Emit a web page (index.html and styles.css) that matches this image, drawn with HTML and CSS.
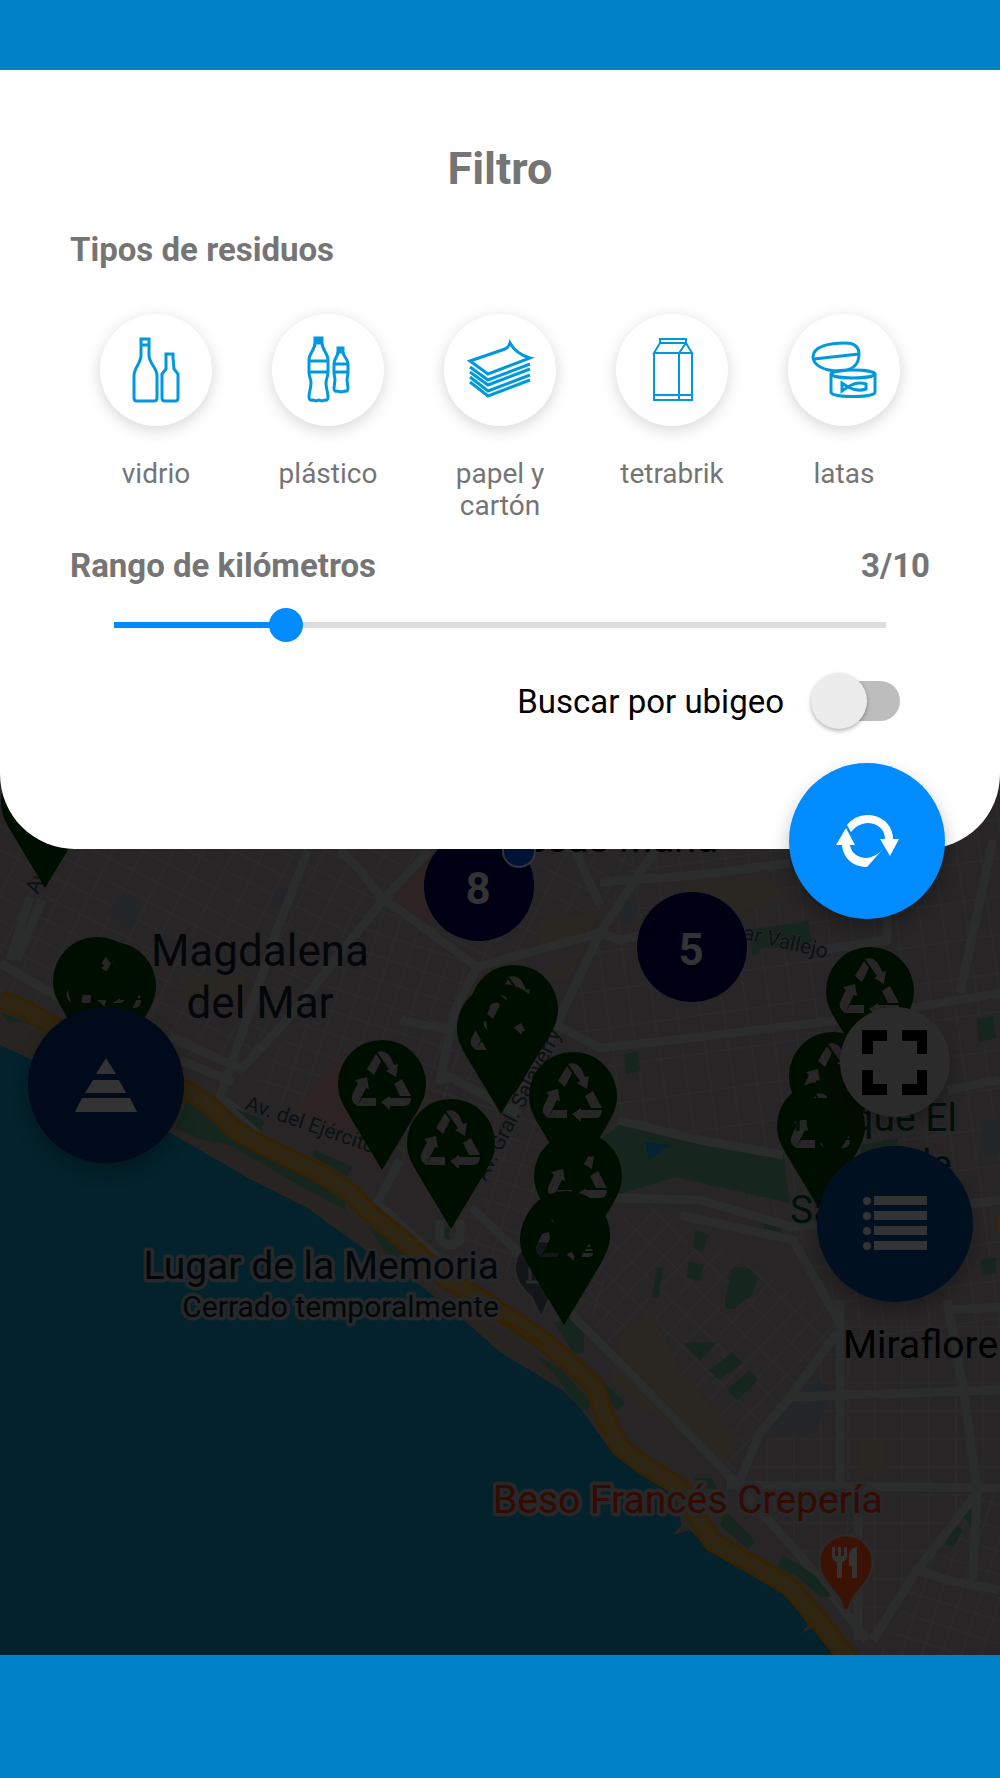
FILE: index.html
```html
<!DOCTYPE html>
<html lang="es">
<head>
    <meta charset="UTF-8">
    <meta name="viewport" content="width=device-width, initial-scale=1.0">
    <title>Filtro</title>
    <link rel="stylesheet" href="styles.css">
</head>
<body>
    <header class="top-bar"></header>

    <main class="stage">
        <!-- Mapa -->
        <svg class="map" viewBox="0 70 1000 1585" preserveAspectRatio="xMidYMin slice" role="img" aria-label="Mapa de puntos de reciclaje">
            <defs>
                <pattern id="grid-a" width="27" height="21" patternUnits="userSpaceOnUse" patternTransform="rotate(27)">
                    <path class="street" d="M0 0H27M0 0V21"/>
                </pattern>
                <pattern id="grid-b" width="23" height="38" patternUnits="userSpaceOnUse" patternTransform="rotate(-8)">
                    <path class="street" d="M0 0H23M0 0V38"/>
                </pattern>
                <pattern id="grid-c" width="19" height="26" patternUnits="userSpaceOnUse" patternTransform="rotate(44)">
                    <path class="street" d="M0 0H19M0 0V26"/>
                </pattern>
                <pattern id="grid-d" width="27" height="28" patternUnits="userSpaceOnUse" patternTransform="translate(10 10)">
                    <path class="street" d="M0 0H27M0 0V28"/>
                </pattern>
                <pattern id="grid-e" width="19" height="22" patternUnits="userSpaceOnUse" patternTransform="rotate(18)">
                    <path class="street" d="M0 0H19M0 0V22"/>
                </pattern>
                <path id="pin" fill-rule="evenodd" d="M44 130L11 75C3 62 0 54 0 44A44 44 0 0 1 88 44C88 54 85 62 77 75Z
                    M38 14L29 29L36 35L43 21Z
                    M39 12Q48 9 53 18L56 25L60 24L58 37L48 31L51 29Z
                    M29 37L31 49L28 48L19 66Q11 61 15 53L20 43L17 40Z
                    M24 58H38V66H19Z
                    M56 44L64 39L73 56H62Z
                    M43 62L52 56V58H73Q73 65 67 66H52V70Z"/>
            </defs>

            <rect class="land" y="70" width="1000" height="1585"/>

            <!-- Manzanas -->
            <path fill="url(#grid-a)" d="M0 800H330L383 900L240 1070L0 1000Z"/>
            <path fill="url(#grid-e)" d="M383 900L478 968L440 1180L380 1160L250 1090Z"/>
            <path fill="url(#grid-a)" d="M330 800H600L655 850L600 930L478 968L383 900Z"/>
            <path fill="url(#grid-b)" d="M655 800H1000V1350H840L793 1227L610 1110L560 1017Z"/>
            <path fill="url(#grid-e)" d="M440 1040L620 1120L600 1320L440 1240Z"/>
            <path fill="url(#grid-c)" d="M560 1290L640 1200L840 1320L733 1480Z"/>
            <path fill="url(#grid-d)" d="M840 1320H1000V1488H740L790 1397Z"/>
            <path fill="url(#grid-d)" d="M733 1490H977L870 1640L810 1567Z"/>
            <path fill="url(#grid-e)" d="M977 1490H1000V1655H880L917 1570Z"/>

            <!-- Zonas -->
            <path class="zone-sand" d="M535 928L550 912L580 915L596 903L598 920L560 948L540 942ZM545 977L585 946L568 982ZM680 880L760 865L790 900L700 920ZM180 975H245V1000H185ZM620 1335L650 1310L680 1370L740 1440L720 1465L610 1380ZM860 1440H885V1475H860Z"/>
            <path class="zone-pink" d="M400 880L432 845V930L392 910ZM346 1048L350 1100L382 1170L296 1108Z"/>
            <path class="zone-blue" d="M120 893L142 903L130 928L108 916ZM274 890H285V907H273ZM620 900L636 905L633 925L622 920ZM982 1120H1000V1155H982ZM795 1395L820 1380L830 1395L815 1433L770 1432Z"/>
            <path class="park" d="M602 1138L622 1123L680 1135L783 1152L790 1203L675 1177L620 1194ZM624 1055L638 1051L640 1071L626 1074ZM748 930L808 921L812 947L762 948L753 956L750 940ZM977 1019L993 1016L996 1038L979 1042ZM765 1223L783 1228L779 1237L762 1233ZM695 1230L709 1235L703 1251L693 1248ZM689 1262L703 1265L700 1281L686 1278ZM732 1268Q750 1263 758 1278L752 1295L735 1308Q724 1312 725 1300ZM683 1343L717 1342L700 1361ZM732 1352L742 1363L719 1380L709 1371ZM750 1370L758 1380L737 1400L727 1390ZM657 1268L663 1267L658 1298L652 1297ZM436 1226L449 1228L450 1240L438 1238ZM554 1323L574 1315L584 1330V1352L574 1353ZM860 1145L898 1138L896 1160L862 1160ZM980 1260L996 1257V1273L983 1275ZM962 1516L976 1503L975 1528ZM945 1545L954 1525L963 1530L953 1547Z"/>
            <path class="lake" d="M645 1142L670 1145L649 1160Z"/>

            <!-- Avenidas -->
            <g class="roads">
                <path d="M308 850L277 930L263 973L230 1067L220 1097L262 1130M340 850L360 870L383 900L333 963L287 1020L240 1070M383 900L430 850M383 900L400 910L477 967L455 1010L440 1080L450 1077L520 1115M477 967L600 933L655 850M600 933L560 1017L513 1110M557 1025L600 1048L700 1037L840 1020L1000 993M600 933L620 940L720 920M993 840L960 993M400 1020L450 1030M575 850L600 905"/>
                <path d="M618 1120L700 1140L783 1155M613 1198L700 1200L793 1227L1000 1200M680 1215L793 1240L840 1323M471 1207L513 1247L577 1320L637 1380L733 1480L810 1567L867 1640M840 1300V1483M837 1333L790 1397L760 1433L740 1480M790 1397L1000 1390M947 1300L963 1387L977 1487L973 1580M727 1485L1000 1488M977 1493L917 1570L873 1640M917 1570L947 1580L1000 1590"/>
                <path d="M600 882L700 875L790 863M822 950L887 940V900M947 1090L1000 1080M950 1310L1000 1307M30 897L10 960M42 900L17 960M0 963L63 1000M170 1037L243 1070M180 1060L233 1082M400 1160L377 1203L440 1260M440 1220V1240Q450 1250 460 1240V1220M858 1500V1640"/>
            </g>

            <!-- Costa -->
            <path class="beach" d="M0 1012L50 1040L187 1105L237 1145L320 1190L370 1230L440 1295L510 1335L570 1380L600 1430L650 1480L690 1520L757 1580L830 1655H0Z"/>
            <path class="park" d="M0 1012L45 1028L20 1022L8 1022ZM187 1100L215 1112L230 1130L290 1162L345 1195L345 1210L290 1180L230 1145L196 1138L175 1128ZM314 1150L353 1167L347 1176L312 1156ZM235 1108L264 1120L262 1132ZM368 1226L400 1248L410 1265L388 1257ZM535 1355L560 1368L590 1400L588 1410L575 1405L555 1375ZM580 1362L602 1380L625 1403L618 1410L600 1395ZM694 1478H712L718 1490L700 1488ZM725 1510L745 1530L755 1542L748 1549L720 1525ZM782 1555L815 1575L832 1597H820L800 1578L778 1567Z"/>
            <path class="water" d="M0 1045L28 1058L170 1133L200 1150L248 1178L307 1208L368 1252L417 1283L467 1323L500 1352L562 1390L580 1408L607 1445L623 1458L677 1495L681 1525L673 1535L690 1530L707 1547L747 1572L787 1593L808 1625L800 1634L812 1628L833 1655H0Z"/>
            <path class="highway-edge" d="M0 1000L23 1008L55 1027L187 1091L210 1105L237 1132L277 1153L320 1173L350 1192L370 1213L400 1237L447 1280L480 1298L540 1338L570 1363L595 1387L605 1417L620 1447L647 1467L680 1487L697 1517L713 1542L757 1567L790 1587L813 1613L850 1660"/>
            <path class="highway" d="M0 1000L23 1008L55 1027L187 1091L210 1105L237 1132L277 1153L320 1173L350 1192L370 1213L400 1237L447 1280L480 1298L540 1338L570 1363L595 1387L605 1417L620 1447L647 1467L680 1487L697 1517L713 1542L757 1567L790 1587L813 1613L850 1660"/>
            <path class="highway-line" d="M500 1320L518 1328L545 1345L525 1338Z"/>
            <circle class="shield" cx="1019" cy="1224" r="22"/>

            <!-- Etiquetas -->
            <text class="label street-name" transform="translate(38 895) rotate(-68)">Av</text>
            <text class="label street-name" transform="translate(244 1109) rotate(19)">Av. del Ejército</text>
            <text class="label street-name" transform="translate(486 1182) rotate(-63)">Av. Gral. Salaverry</text>
            <text class="label street-name" transform="translate(742 939) rotate(13)">ar Vallejo</text>
            <text class="label district" x="718" y="852" text-anchor="end">Jesús María</text>
            <text class="label city" x="260" y="966" text-anchor="middle">Magdalena</text>
            <text class="label city" x="260" y="1018" text-anchor="middle">del Mar</text>
            <text class="label place" x="499" y="1279" text-anchor="end">Lugar de la Memoria</text>
            <text class="label note" x="499" y="1317" text-anchor="end">Cerrado temporalmente</text>
            <text class="label place food" x="493" y="1513">Beso Francés Crepería</text>
            <text class="label district" x="843" y="1358">Miraflore</text>
            <text class="label green" x="957" y="1131" text-anchor="end">Parque El</text>
            <text class="label green" x="952" y="1177" text-anchor="end">Olivar de</text>
            <text class="label green" x="790" y="1223">San</text>

            <!-- Lugares -->
            <path class="museum" d="M541 1317L532 1298C522 1288 515 1280 515 1268A27 27 0 0 1 569 1268C569 1280 560 1288 550 1298Z"/>
            <path class="museum-icon" d="M526 1282H545M530 1262V1280"/>
            <path class="restaurant" d="M846 1611Q843 1611 842 1606C840 1593 819 1583 819 1562A27 27 0 0 1 873 1562C873 1583 852 1593 850 1606Q849 1611 846 1611Z"/>
            <path class="cutlery" d="M832 1547V1556Q832 1561 837 1562V1578H842V1562Q847 1561 847 1556V1547H844V1556H841V1547H838V1556H835V1547ZM857 1547V1578H852V1566H849V1554Q850 1548 857 1547Z"/>

            <!-- Puntos de reciclaje -->
            <g class="pins">
                <use href="#pin" x="1" y="758"/>
                <use href="#pin" x="53" y="937"/>
                <use href="#pin" x="68" y="942"/>
                <use href="#pin" x="338" y="1040"/>
                <use href="#pin" x="407" y="1099"/>
                <use href="#pin" x="470" y="965"/>
                <use href="#pin" x="457" y="984"/>
                <use href="#pin" x="529" y="1052"/>
                <use href="#pin" x="534" y="1132"/>
                <use href="#pin" x="522" y="1191"/>
                <use href="#pin" x="520" y="1195"/>
                <use href="#pin" x="826" y="947"/>
                <use href="#pin" x="789" y="1032"/>
                <use href="#pin" x="777" y="1082"/>
            </g>
            <circle class="cluster" cx="479" cy="886" r="55"/>
            <text class="cluster-count" x="478" y="904">8</text>
            <circle class="cluster" cx="692" cy="947" r="55"/>
            <text class="cluster-count" x="691" y="965">5</text>
            <circle class="location" cx="519" cy="851" r="16"/>
        </svg>

        <!-- Botones del mapa -->
        <button class="fab fab-layers" type="button" aria-label="Pirámide">
            <svg viewBox="0 0 156 156"><path d="M78 51L88 67H68ZM65 73H91L98 86H57ZM54 91H102L109 105H47Z"/></svg>
        </button>
        <button class="fab fab-expand" type="button" aria-label="Pantalla completa">
            <svg viewBox="0 0 110 110"><path d="M22 23H47V34H33V47H22ZM62 23H87V47H77V34H62ZM22 63H33V77H47V88H22ZM77 63H87V88H62V77H77Z"/></svg>
        </button>
        <button class="fab fab-list" type="button" aria-label="Lista">
            <svg viewBox="0 0 156 156">
                <path d="M57 50H110V59H57ZM57 65H110V74H57ZM57 80H110V89H57ZM57 95H110V104H57Z"/>
                <circle cx="50" cy="55" r="4"/><circle cx="50" cy="70" r="4"/><circle cx="50" cy="85" r="4"/><circle cx="50" cy="100" r="4"/>
            </svg>
        </button>

        <!-- Panel de filtro -->
        <form class="panel">
            <h1 class="title">Filtro</h1>
            <h2 class="subtitle">Tipos de residuos</h2>

            <div class="types">
                <button class="type" type="button">
                    <span class="type-icon">
                        <svg viewBox="0 0 112 112">
                            <path d="M41 25H49V41C49 50 57 53 57 62V84Q57 87 54 87H37Q34 87 34 84V62C34 53 41 50 41 41ZM41 31H49"/>
                            <path d="M66 40H73V44L74 55L78 60V84Q78 87 75 87H65Q62 87 62 84V60L66 55Z"/>
                        </svg>
                    </span>
                    vidrio
                </button>
                <button class="type" type="button">
                    <span class="type-icon">
                        <svg viewBox="0 0 112 112">
                            <path d="M43 29C43 36 37 39 37 46V58C37 63 39 65 39 69C39 75 37 77 37 83Q37 87 41 86L44 87L47 86L50 87L53 86Q56 87 56 83C56 77 54 75 54 69C54 65 56 63 56 58V46C56 39 50 36 50 29M37 47H56M37 58H56"/>
                            <path d="M66 38C66 43 62 44 62 50V58C62 62 63 63 63 66L62 74Q62 78 65 77L69 78L73 77Q76 78 76 74L75 66C75 63 76 62 76 58V50C76 44 71 43 71 38M62 50H76M62 58H76"/>
                            <path class="solid" d="M43 24H50V29H43ZM66 34H71V38H66Z"/>
                        </svg>
                    </span>
                    plástico
                </button>
                <button class="type" type="button">
                    <span class="type-icon">
                        <svg viewBox="0 0 112 112">
                            <path d="M26 47L61 35Q65 33 66 29Q72 40 86 44L44 60ZM26 53L44 66L86 50M26 58L44 71L86 55M26 63L44 77L86 61M26 68L44 82L86 66"/>
                        </svg>
                    </span>
                    papel y cartón
                </button>
                <button class="type" type="button">
                    <span class="type-icon">
                        <svg class="thin" viewBox="0 0 112 112">
                            <path d="M44 25H70V29H44ZM44 29L38 39H76L70 29L63 39M38 39V86H76V39M63 39V86M38 81H76"/>
                        </svg>
                    </span>
                    tetrabrik
                </button>
                <button class="type" type="button">
                    <span class="type-icon">
                        <svg viewBox="0 0 112 112">
                            <path d="M25 43C25 32 42 29 57 29C67 29 71 33 71 40C71 50 65 57 51 57C36 57 25 51 25 43ZM26 45L71 40"/>
                            <ellipse cx="65" cy="60" rx="22" ry="4"/>
                            <path d="M43 60V78C43 84 87 84 87 78V60"/>
                            <path d="M54 69V77L60 73ZM60 73Q69 67 78 70V75Q69 78 60 73Z"/>
                        </svg>
                    </span>
                    latas
                </button>
            </div>

            <div class="range-head">
                <label class="subtitle" for="range">Rango de kilómetros</label>
                <output class="subtitle" for="range">3/10</output>
            </div>
            <input class="range" id="range" type="range" min="1" max="10" value="3">

            <div class="switch-row">
                <label for="ubigeo">Buscar por ubigeo</label>
                <input class="switch" id="ubigeo" type="checkbox">
            </div>

            <button class="fab fab-refresh" type="button" aria-label="Actualizar">
                <svg viewBox="0 0 156 156">
                    <path d="M58 62Q66 52 78 52C93 52 104 62 104 76H110L101 93L91 76H96C96 66 88 60 78 60Q68 61 62 69Z"/>
                    <path d="M57 65L66 82H61C62 90 69 95 78 95Q87 94 94 86L78 104C64 104 54 95 53 82H47Z"/>
                </svg>
            </button>
        </form>
    </main>

    <footer class="bottom-bar"></footer>
</body>
</html>
```

FILE: styles.css
```css
* { margin: 0; padding: 0; box-sizing: border-box; }

body {
    display: flex;
    flex-direction: column;
    min-height: 100vh;
    background: #0082c9;
    font-family: Roboto, sans-serif;
    color: #757575;
}

button {
    border: none;
    background: none;
    font: inherit;
    color: inherit;
    cursor: pointer;
}

/* Barras */
.top-bar {
    height: 70px;
}

.bottom-bar {
    height: 123px;
}

.stage {
    flex: 1;
    position: relative;
    overflow: hidden;
}

/* Mapa */
.map {
    position: absolute;
    inset: 0;
    width: 100%;
    height: 100%;
}

.land { fill: #272526; }
.street { fill: none; stroke: #2a2a2b; stroke-width: 3; }
.roads { fill: none; stroke: #2b2c2c; stroke-width: 9; stroke-linejoin: round; }
.zone-sand { fill: #2a2622; }
.zone-pink { fill: #2d2322; }
.zone-blue { fill: #232629; }
.park { fill: #16261f; }
.lake { fill: #04222f; }
.beach { fill: #282422; }
.water { fill: #03222b; }
.highway-edge { fill: none; stroke: #352202; stroke-width: 20; stroke-linejoin: round; }
.highway { fill: none; stroke: #2e2613; stroke-width: 14; stroke-linejoin: round; }
.highway-line { fill: none; stroke: #352202; stroke-width: 2; }
.shield { fill: #3a2600; }

.label {
    fill: #04070a;
    stroke: #272829;
    stroke-width: 7px;
    stroke-linejoin: round;
    paint-order: stroke;
}

.street-name { font-size: 21px; fill: #0d1013; stroke-width: 2px; }
.city { font-size: 44px; stroke-width: 0; }
.district { font-size: 39px; fill: #000000; stroke-width: 2px; }
.place { font-size: 39px; }
.note { font-size: 30px; }
.food { fill: #330b02; }
.green { font-size: 39px; fill: #03100a; stroke-width: 3px; }

.museum { fill: #131518; stroke: #2a2a2b; stroke-width: 2; }
.museum-icon { fill: none; stroke: #2a2a2b; stroke-width: 3; }
.restaurant { fill: #3b1204; stroke: #2a2a2b; stroke-width: 3; }
.cutlery { fill: #333333; }
.pins { fill: #000e00; }
.cluster { fill: #000014; }
.cluster-count { font-size: 44px; font-weight: bold; fill: #333333; text-anchor: middle; }
.location { fill: #001238; stroke: #333333; stroke-width: 2; }

/* Botones flotantes */
.fab {
    position: absolute;
    width: 156px;
    height: 156px;
    border-radius: 50%;
    box-shadow: 0 8px 18px rgba(0, 0, 0, 0.25);
}

.fab svg {
    display: block;
    width: 100%;
    height: 100%;
}

.fab-layers {
    left: 28px;
    top: 937px;
    background: #000a1a;
    fill: #333333;
}

.fab-expand {
    right: 50px;
    top: 937px;
    width: 110px;
    height: 110px;
    background: #2b2b2b;
    fill: #000000;
}

.fab-list {
    right: 27px;
    top: 1076px;
    background: #001021;
    fill: #333333;
}

.fab-refresh {
    right: 55px;
    bottom: -70px;
    background: #008cff;
    fill: #ffffff;
}

/* Panel */
.panel {
    position: relative;
    padding: 71px 70px 120px;
    border-radius: 0 0 75px 75px;
    background: #ffffff;
}

.title {
    font-size: 45px;
    line-height: 56px;
    text-align: center;
}

.subtitle {
    font-size: 33px;
    font-weight: bold;
    line-height: 40px;
}

.title + .subtitle {
    margin-top: 33px;
}

/* Tipos de residuos */
.types {
    display: grid;
    grid-template-columns: repeat(5, 1fr);
    align-items: start;
    margin-top: 44px;
}

.type {
    display: flex;
    flex-direction: column;
    align-items: center;
    gap: 32px;
    padding: 0 30px;
    font-size: 28px;
    line-height: 32px;
}

.type-icon {
    width: 112px;
    height: 112px;
    border-radius: 50%;
    background: #ffffff;
    box-shadow: 0 4px 16px rgba(0, 0, 0, 0.16);
}

.type-icon svg {
    display: block;
    fill: none;
    stroke: #0099e0;
    stroke-width: 3;
}

.type-icon .thin {
    stroke-width: 2;
}

.type-icon .solid {
    fill: #0099e0;
}

/* Rango */
.range-head {
    display: flex;
    justify-content: space-between;
    margin-top: 24px;
}

.range {
    display: block;
    appearance: none;
    width: calc(100% - 54px);
    height: 34px;
    margin: 22px 27px 0;
    background: linear-gradient(to right, #008cff 22%, #dddddd 22%) center / calc(100% - 34px) 6px no-repeat;
}

.range::-webkit-slider-thumb {
    appearance: none;
    width: 34px;
    height: 34px;
    border-radius: 50%;
    background: #008cff;
}

/* Interruptor */
.switch-row {
    display: flex;
    justify-content: flex-end;
    align-items: center;
    gap: 32px;
    height: 56px;
    margin-top: 31px;
    padding-right: 30px;
    font-size: 33px;
    color: #000000;
}

.switch {
    appearance: none;
    position: relative;
    width: 84px;
    height: 40px;
    border-radius: 20px;
    background: #bdbdbd;
}

.switch::before {
    content: "";
    position: absolute;
    left: -5px;
    top: -8px;
    width: 56px;
    height: 56px;
    border-radius: 50%;
    background: #ececec;
    box-shadow: 0 2px 4px rgba(0, 0, 0, 0.3);
}

.switch:checked::before {
    left: 33px;
    background: #008cff;
}
```
